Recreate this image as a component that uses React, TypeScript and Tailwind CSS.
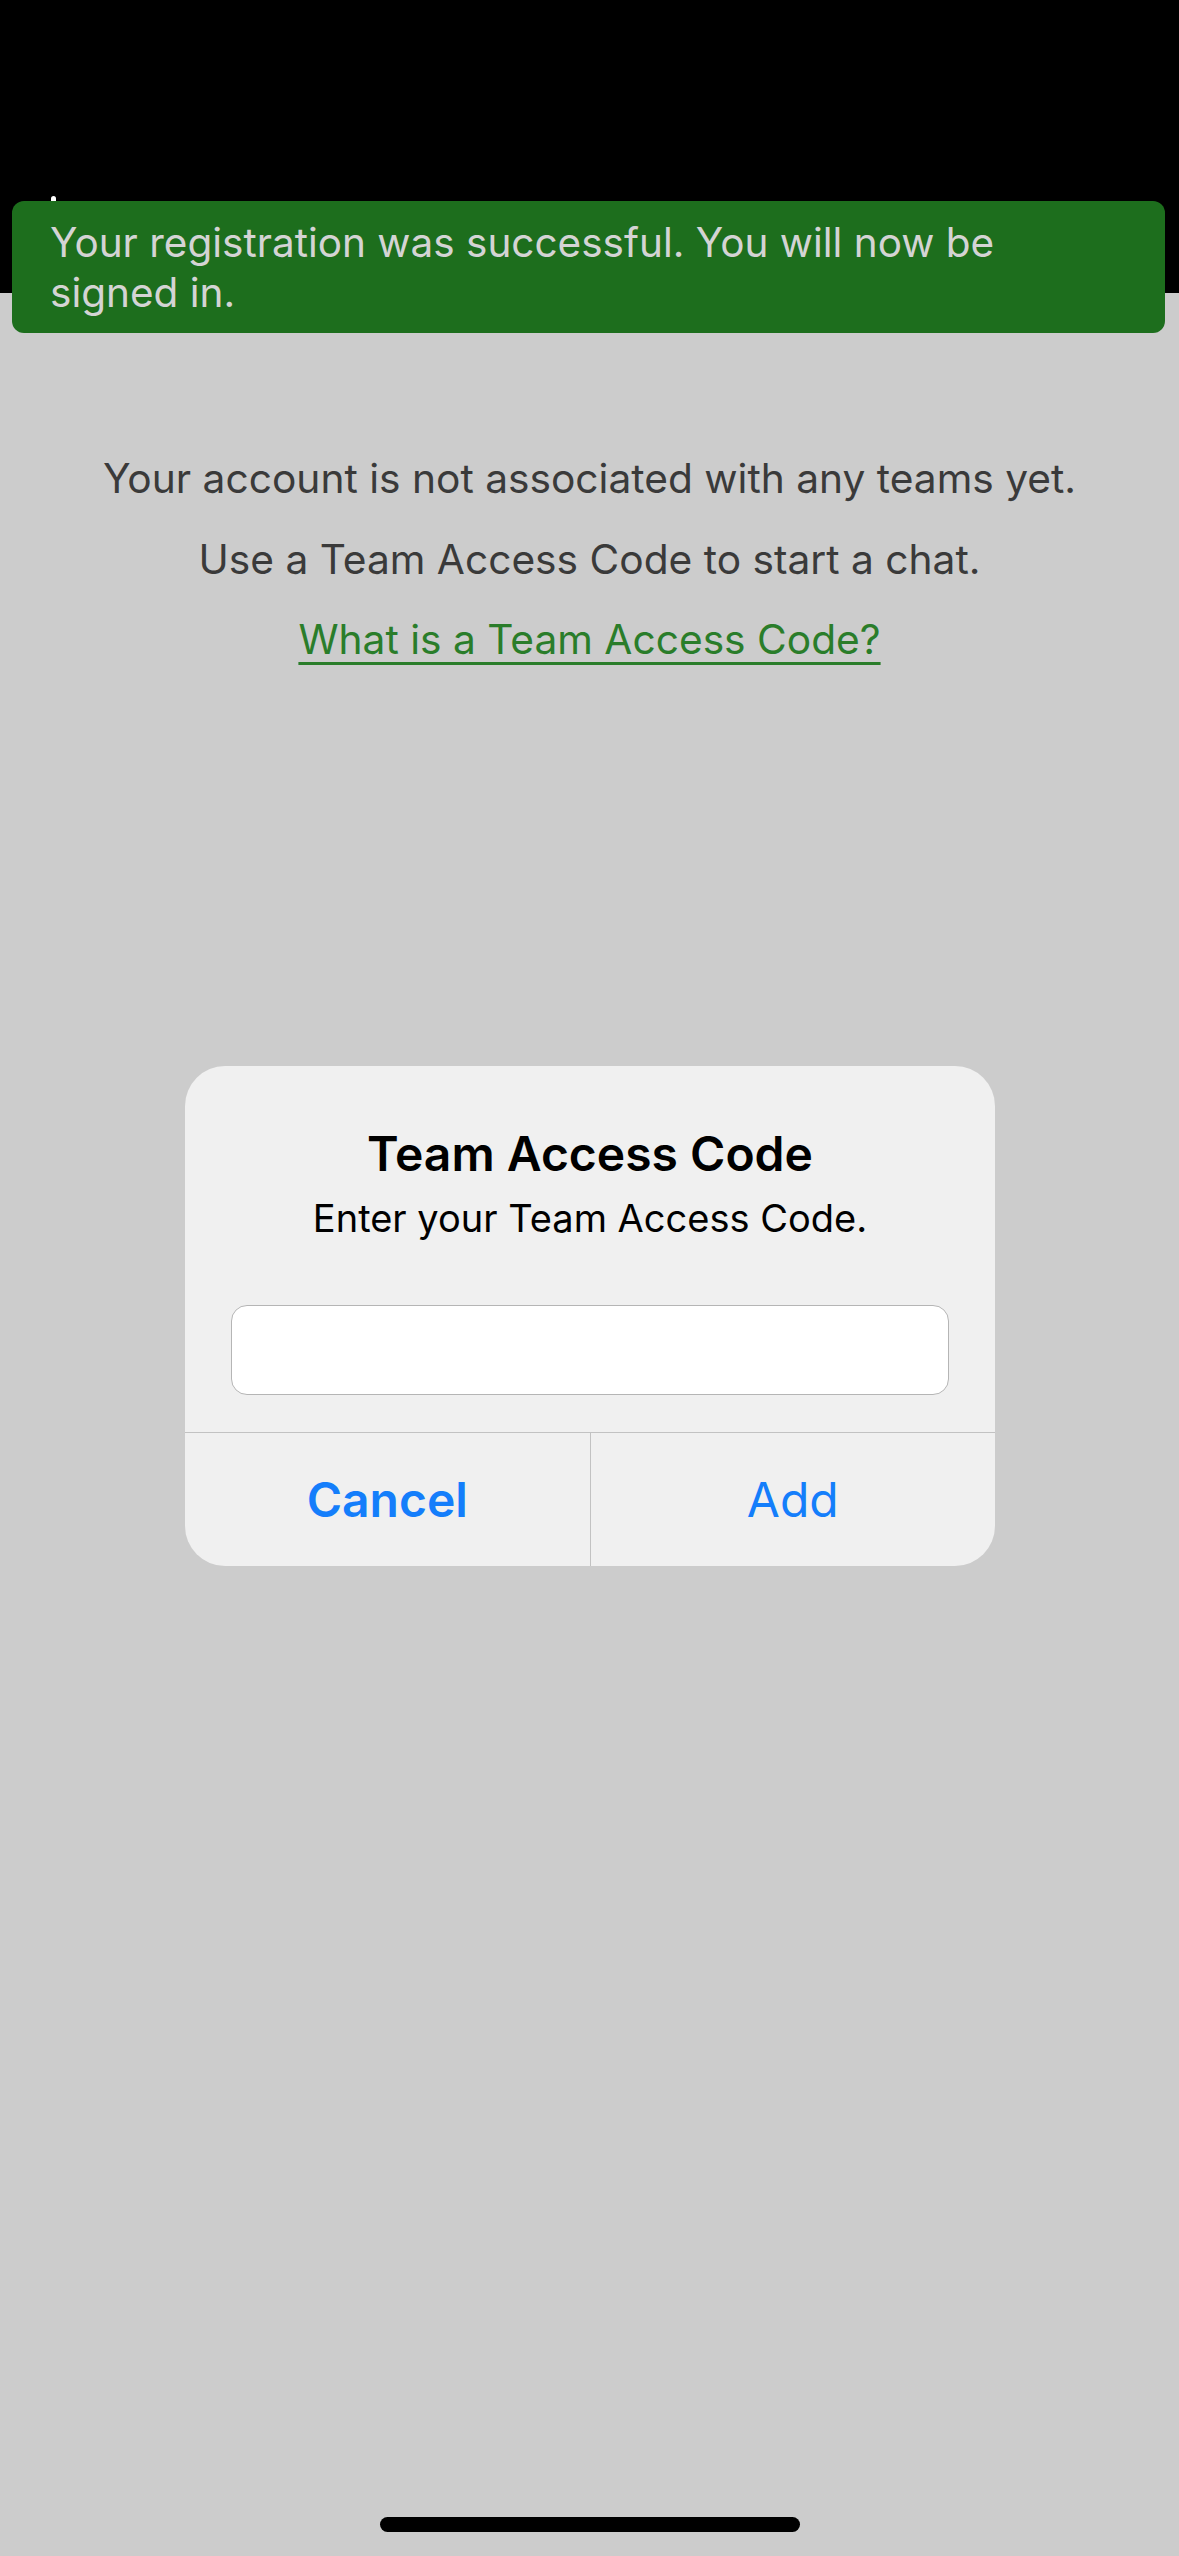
import React from "react";

export default function App() {
  const font = { fontFamily: "Inter, 'Noto Sans', sans-serif" } as React.CSSProperties;
  return (
    <div className="relative w-[1179px] h-[2556px] bg-[#cccccc] overflow-hidden" style={font}>
      <div className="relative h-[293px] bg-black">
        <div className="absolute left-[51px] top-[196px] w-[5px] h-[8px] rounded-t-full bg-white" />
      </div>

      <div className="flex flex-col items-center pt-[146px] text-[40.7px] text-[#3a3a3a] leading-[80.5px]">
        <p>Your account is not associated with any teams yet.</p>
        <p>Use a Team Access Code to start a chat.</p>
        <a className="text-[#2a7d2a] underline underline-offset-[8px] decoration-[3px]">What is a Team Access Code?</a>
      </div>

      {/* toast banner */}
      <div className="absolute top-[201px] left-[12px] w-[1153px] h-[132px] rounded-[12px] bg-[#1d6e1d] pl-[38px] pr-[40px] pt-[17px]">
        <p className="text-[40.5px] leading-[50px] text-[#d4d4d4]">
          Your registration was successful. You will now be signed in.
        </p>
      </div>

      {/* alert dialog */}
      <div className="absolute top-[1066px] left-[185px] w-[810px] h-[500px] rounded-[40px] bg-[#f0f0f0] flex flex-col">
        <div className="flex flex-col items-center pt-[60px]">
          <h2 className="text-[48px] font-semibold leading-[56px] text-black">Team Access Code</h2>
          <p className="text-[38px] leading-[48px] text-black mt-[12px]">Enter your Team Access Code.</p>
        </div>
        <div className="px-[46px] mt-[63px]">
          <div className="h-[90px] rounded-[16px] bg-white border border-[#b5b5b5]" />
        </div>
        <div className="mt-[37px] border-t border-[#c2c2c2] flex flex-1">
          <div className="flex-1 flex items-center justify-center text-[48px] font-semibold text-[#147efb] border-r border-[#c2c2c2]">Cancel</div>
          <div className="flex-1 flex items-center justify-center text-[48px] text-[#147efb]">Add</div>
        </div>
      </div>

      {/* home indicator */}
      <div className="absolute left-[380px] top-[2517px] w-[420px] h-[15px] rounded-full bg-black" />
    </div>
  );
}
